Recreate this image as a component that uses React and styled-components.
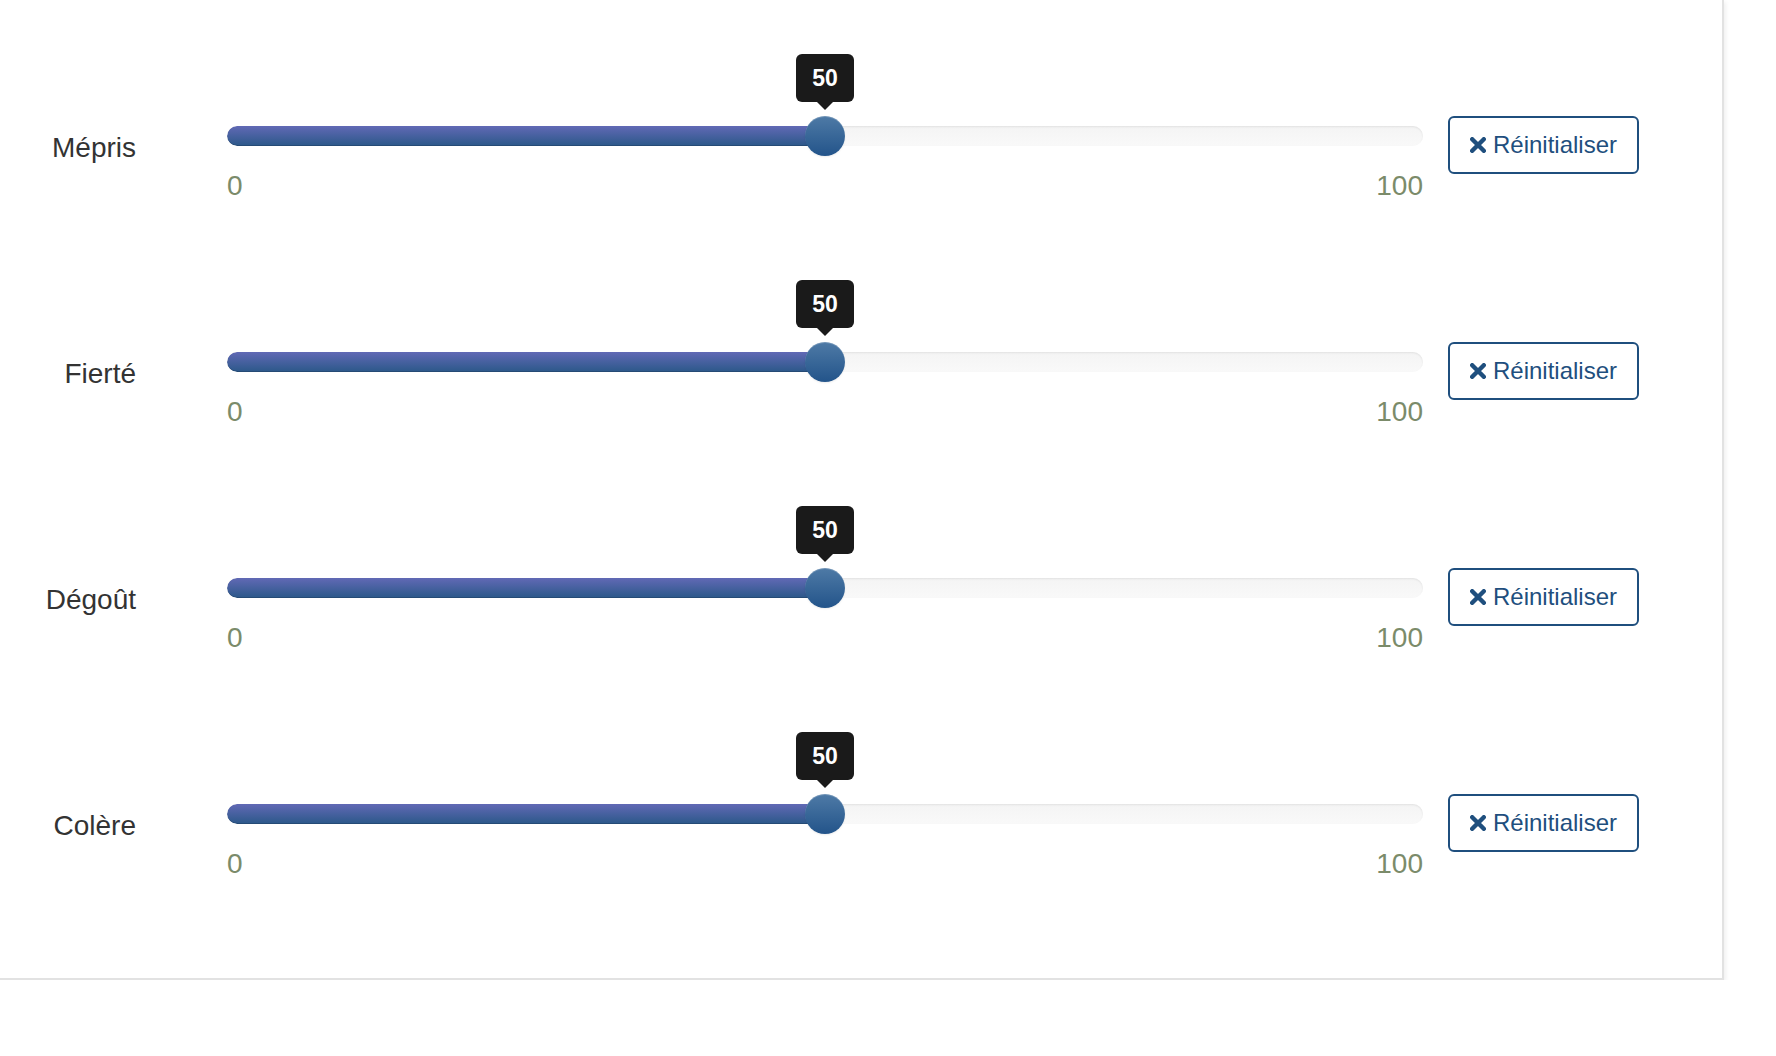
import React from 'react';
import styled, { createGlobalStyle } from 'styled-components';

const GlobalStyle = createGlobalStyle`
  html, body {
    margin: 0;
    padding: 0;
    background: #fff;
    font-family: "Liberation Sans", Arial, Helvetica, sans-serif;
    color: #333;
  }
`;

// Panel that bleeds off the top-left of the viewport
const Panel = styled.div`
  box-sizing: border-box;
  width: 1724px;
  padding: 116px 0 94px 0;
  background: #fff;
  border-right: 2px solid #e2e2e2;
  border-bottom: 2px solid #e2e2e2;
  box-shadow: 2px 2px 4px rgba(0, 0, 0, 0.06);
  display: flex;
  flex-direction: column;
  gap: 136px;
`;

const Row = styled.div`
  display: flex;
  align-items: flex-start;
`;

const Label = styled.label`
  width: 136px;
  margin-top: 12px;
  text-align: right;
  font-size: 28px;
  line-height: 40px;
  color: #333;
`;

const SliderCol = styled.div`
  width: 1196px;
  margin-left: 91px;
`;

const Slider = styled.div`
  position: relative;
  height: 40px;
  padding-top: 10px;
  box-sizing: border-box;
`;

const Track = styled.div`
  height: 20px;
  border-radius: 10px;
  background-image: linear-gradient(to bottom, #f4f4f4 0%, #f9f9f9 100%);
  box-shadow: inset 0 1px 2px rgba(0, 0, 0, 0.08);
  overflow: hidden;
`;

const Selection = styled.div`
  height: 100%;
  border-radius: 10px 0 0 10px;
  background-image: linear-gradient(to bottom, #6169b5 0%, #2b5889 100%);
  box-shadow: inset 0 -1px 0 rgba(0, 0, 0, 0.15);
`;

const Handle = styled.div`
  position: absolute;
  top: 0;
  width: 40px;
  height: 40px;
  margin-left: -20px;
  border-radius: 50%;
  background-image: linear-gradient(to bottom, #4e7aa6 0%, #23548a 100%);
  box-shadow: inset 0 1px 0 rgba(255, 255, 255, 0.2), 0 1px 2px rgba(0, 0, 0, 0.08);
`;

const Tooltip = styled.div`
  position: absolute;
  bottom: 54px;
  left: 50%;
  transform: translateX(-50%);
  min-width: 58px;
  height: 48px;
  box-sizing: border-box;
  padding: 0 16px;
  border-radius: 6px;
  background: #1a1a1a;
  color: #fff;
  font-size: 23px;
  font-weight: bold;
  line-height: 48px;
  text-align: center;

  &::after {
    content: '';
    position: absolute;
    left: 50%;
    bottom: -8px;
    margin-left: -8px;
    border-left: 8px solid transparent;
    border-right: 8px solid transparent;
    border-top: 8px solid #1a1a1a;
  }
`;

const Ticks = styled.div`
  display: flex;
  justify-content: space-between;
  margin-top: 10px;
  font-size: 28px;
  line-height: 40px;
  color: #7b8b6a;
`;

const ResetButton = styled.button`
  display: inline-flex;
  align-items: center;
  gap: 7px;
  height: 58px;
  margin-left: 25px;
  padding: 0 20px;
  border: 2px solid #1f4f7e;
  border-radius: 6px;
  background: #fff;
  color: #1f4f7e;
  font-family: inherit;
  font-size: 24px;
  cursor: pointer;
`;

const RemoveIcon = () => (
  <svg width="16" height="16" viewBox="0 0 16 16" aria-hidden="true">
    <path
      d="M2.2 2.2 L13.8 13.8 M13.8 2.2 L2.2 13.8"
      stroke="currentColor"
      strokeWidth="4.4"
      strokeLinecap="round"
      fill="none"
    />
  </svg>
);

const emotions = [
  { name: 'Mépris', value: 50 },
  { name: 'Fierté', value: 50 },
  { name: 'Dégoût', value: 50 },
  { name: 'Colère', value: 50 },
];

const EmotionSlider = ({ name, value, min = 0, max = 100 }) => {
  const pct = ((value - min) / (max - min)) * 100;
  return (
    <Row>
      <Label>{name}</Label>
      <SliderCol>
        <Slider>
          <Track>
            <Selection style={{ width: `${pct}%` }} />
          </Track>
          <Handle style={{ left: `${pct}%` }}>
            <Tooltip>{value}</Tooltip>
          </Handle>
        </Slider>
        <Ticks>
          <span>{min}</span>
          <span>{max}</span>
        </Ticks>
      </SliderCol>
      <ResetButton type="button">
        <RemoveIcon />
        Réinitialiser
      </ResetButton>
    </Row>
  );
};

const App = () => (
  <>
    <GlobalStyle />
    <Panel>
      {emotions.map((e) => (
        <EmotionSlider key={e.name} name={e.name} value={e.value} />
      ))}
    </Panel>
  </>
);

export default App;
